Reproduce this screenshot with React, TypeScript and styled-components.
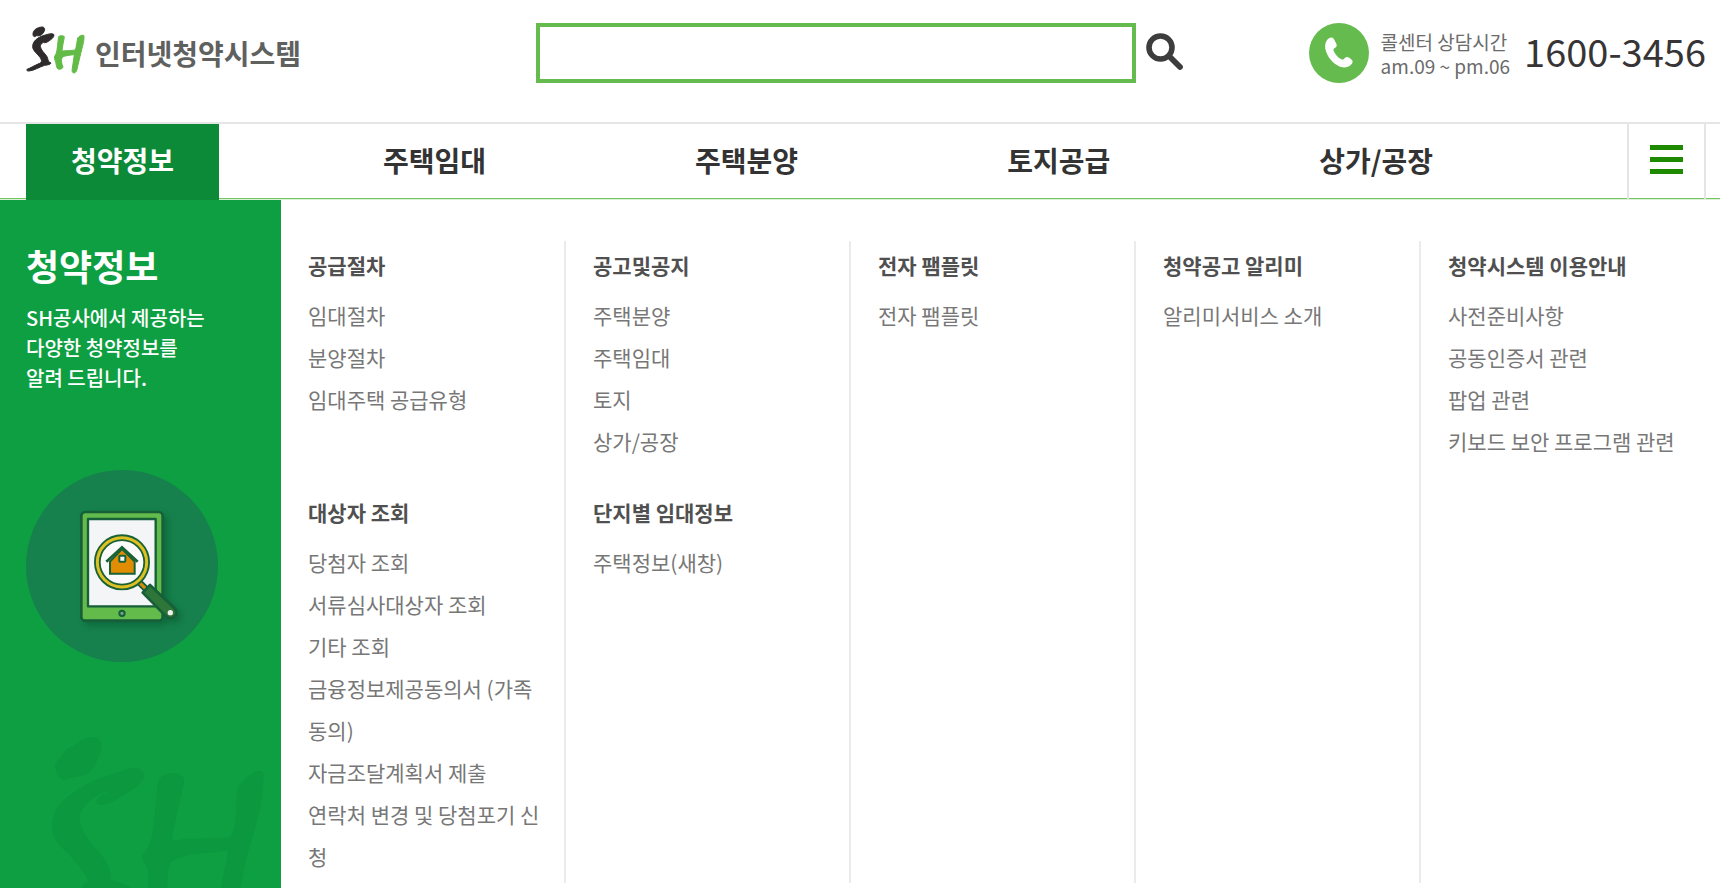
import React from 'react';
import styled, { createGlobalStyle, css } from 'styled-components';

const color = {
  green: '#65bb4d',
  panel: '#0d9f42',
  panelDark: '#0c8a38',
  line: '#e5e5e5',
  ink: '#333333',
  heading: '#505050',
  text: '#777777',
};

const GlobalStyle = createGlobalStyle`
  *, *::before, *::after { box-sizing: border-box; }
  body {
    margin: 0;
    background: #ffffff;
    color: ${color.ink};
    font-family: "Noto Sans CJK KR", "Noto Sans", sans-serif;
  }
  h2, h3, p, ul { margin: 0; padding: 0; }
  ul { list-style: none; }
  a { color: inherit; text-decoration: none; }
  button { padding: 0; border: 0; background: none; font: inherit; cursor: pointer; }
`;

const Page = styled.div`
  display: flex;
  flex-direction: column;
  min-height: 100vh;
`;

const Header = styled.header`
  display: grid;
  grid-template-columns: 1fr auto 1fr;
  align-items: start;
  padding: 23px 1px 39px 0;
`;

const Logo = styled.a`
  display: flex;
  align-items: flex-start;
  gap: 10px;
  padding: 3px 0 0 26px;
  color: #5f615f;
  font-size: 28px;
  font-weight: 700;
  line-height: 54px;
  white-space: nowrap;
`;

const Search = styled.form`
  display: flex;
  align-items: flex-start;
  gap: 10px;
`;

const SearchInput = styled.input`
  width: 600px;
  height: 60px;
  padding: 0 16px;
  border: 4px solid ${color.green};
  background: #ffffff;
  font: inherit;
  font-size: 21px;
  outline: none;
`;

const SearchButton = styled.button`
  display: flex;
  width: 37px;
  height: 37px;
  margin-top: 10px;
`;

const CallCenter = styled.div`
  display: flex;
  align-items: flex-start;
  justify-content: flex-end;
  gap: 12px;
  padding-right: 13px;
  white-space: nowrap;
`;

const CallHours = styled.p`
  padding-top: 7px;
  color: #6b6b6b;
  font-size: 19px;
  line-height: 24px;
`;

const CallNumber = styled.a`
  margin-left: 2px;
  color: #373435;
  font-size: 38px;
  line-height: 56px;
`;

const NavBar = styled.nav`
  display: flex;
  justify-content: space-between;
  height: 78px;
  padding-right: 14px;
  border-top: 2px solid ${color.line};
  background: linear-gradient(to top, #dcefd8 0 1px, #72c75e 1px 2px, #ffffff 2px);
`;

const Tabs = styled.ul`
  display: flex;
  gap: 119px;
  padding-left: 26px;
`;

const Tab = styled.a<{ $active?: boolean }>`
  display: block;
  padding: 0 45px 4px;
  font-size: 28px;
  font-weight: 700;
  line-height: 72px;
  white-space: nowrap;
  ${({ $active }) =>
    $active &&
    css`
      background: ${color.panelDark};
      color: #ffffff;
    `}
`;

const MenuButton = styled.button`
  display: flex;
  align-items: center;
  justify-content: center;
  width: 79px;
  padding-bottom: 6px;
  border-right: 2px solid ${color.line};
  border-left: 2px solid ${color.line};
`;

const MegaMenu = styled.section`
  display: flex;
  flex: 1;
`;

const Side = styled.aside`
  display: flex;
  flex: 0 0 281px;
  flex-direction: column;
  padding: 39px 0 0 26px;
  background: ${color.panel};
  color: #ffffff;
`;

const SideTitle = styled.h2`
  font-size: 36px;
  font-weight: 700;
  line-height: 52px;
`;

const SideText = styled.p`
  padding-top: 12px;
  font-size: 20px;
  font-weight: 500;
  line-height: 30px;
`;

const Emblem = styled.svg`
  display: block;
  width: 192px;
  height: 192px;
  margin-top: 77px;
`;

const Watermark = styled.svg`
  display: block;
  width: 212px;
  height: 151px;
  margin-top: auto;
  margin-left: 26px;
`;

const Columns = styled.div`
  display: grid;
  flex: 1;
  grid-template-columns: repeat(5, 1fr);
  padding: 41px 14px 5px 0;
`;

const Column = styled.div`
  padding: 3px 24px 6px 27px;
  border-right: 2px solid #ebebeb;

  &:last-child {
    border-right: 0;
  }
`;

const Group = styled.div`
  min-height: 247px;
`;

const GroupTitle = styled.h3`
  padding-bottom: 8px;
  color: ${color.heading};
  font-size: 21px;
  font-weight: 700;
  line-height: 42px;
`;

const GroupItem = styled.li`
  color: ${color.text};
  font-size: 21px;
  line-height: 42px;
`;

type MenuGroup = { title: string; items: string[] };

const tabs = ['청약정보', '주택임대', '주택분양', '토지공급', '상가/공장'];

const columns: MenuGroup[][] = [
  [
    { title: '공급절차', items: ['임대절차', '분양절차', '임대주택 공급유형'] },
    {
      title: '대상자 조회',
      items: [
        '당첨자 조회',
        '서류심사대상자 조회',
        '기타 조회',
        '금융정보제공동의서 (가족동의)',
        '자금조달계획서 제출',
        '연락처 변경 및 당첨포기 신청',
      ],
    },
  ],
  [
    { title: '공고및공지', items: ['주택분양', '주택임대', '토지', '상가/공장'] },
    { title: '단지별 임대정보', items: ['주택정보(새창)'] },
  ],
  [{ title: '전자 팸플릿', items: ['전자 팸플릿'] }],
  [{ title: '청약공고 알리미', items: ['알리미서비스 소개'] }],
  [
    {
      title: '청약시스템 이용안내',
      items: ['사전준비사항', '공동인증서 관련', '팝업 관련', '키보드 보안 프로그램 관련'],
    },
  ],
];

const BrandMark = () => (
  <svg width="59" height="48" viewBox="78 76 177 144" role="img" aria-label="SH">
    <g fill="#2f2b2c" stroke="#2f2b2c" strokeWidth="3" strokeLinejoin="round">
      <path d="M99 100C99 88 112 80 126 79C134 79 136 86 132 93C128 102 119 107 110 105L103 108C100 107 99 104 99 100Z" />
      <path d="M161 101C164 106 158 114 148 120C141 125 134 128 130 125C124 129 121 132 121 137C122 148 134 157 141 168C144 175 144 180 147 184L153 187C152 191 144 193 134 194C118 199 102 210 87 211C81 211 79 209 81 206C88 204 104 194 119 188C127 184 125 178 120 170C113 160 98 150 98 138C98 121 113 110 133 104C145 100 156 97 161 101Z" />
    </g>
    <g fill="#62bb46" stroke="#62bb46" strokeWidth="3" strokeLinejoin="round">
      <path d="M176 108C179 104 190 104 193 108C192 118 187 136 186 151C199 150 214 150 226 148C230 135 231 122 233 112C237 106 247 102 251 104C254 108 250 130 246 143C242 159 238 176 233 197C231 208 229 215 223 217C217 217 215 213 217 203L223 162C210 163 195 165 187 169C182 179 185 189 189 199C188 205 179 207 174 205C168 201 169 187 165 178C162 172 163 166 168 160C173 148 173 122 176 108Z" />
    </g>
  </svg>
);

const SearchIcon = () => (
  <svg width="37" height="37" viewBox="0 0 37 37" aria-hidden="true">
    <circle cx="14.5" cy="14.5" r="11.5" fill="none" stroke="#3d3d3d" strokeWidth="5.6" />
    <path d="M23.5 23.5L34 34" stroke="#3d3d3d" strokeWidth="5.8" strokeLinecap="round" />
  </svg>
);

const PhoneIcon = () => (
  <svg width="60" height="60" viewBox="0 0 180 180" aria-hidden="true">
    <circle cx="90" cy="90" r="90" fill={color.green} />
    <path
      fill="#ffffff"
      d="M60 46C66 42 72 44 75 49L82 62C85 68 82 73 76 76C73 79 73 82 75 86C80 96 88 104 97 109C101 111 104 109 107 106C111 101 116 101 122 105L128 110C133 114 131 120 126 125C117 134 105 135 93 131C71 122 54 101 49 78C47 64 51 52 60 46Z"
    />
  </svg>
);

const MenuIcon = () => (
  <svg width="33" height="29" viewBox="0 0 33 29" aria-hidden="true">
    <path d="M0 0H33V5H0ZM0 12H33V17H0ZM0 24H33V29H0Z" fill="#1d8a00" />
  </svg>
);

const TabletEmblem = () => (
  <Emblem viewBox="78 59 576 576" aria-hidden="true">
    <defs>
      <filter id="soft" x="-20%" y="-20%" width="150%" height="150%">
        <feDropShadow dx="12" dy="12" stdDeviation="10" floodColor="#0b4a2b" floodOpacity="0.4" />
      </filter>
    </defs>
    <circle cx="366" cy="347" r="288" fill="#16814c" />
    <g stroke="#135f38" strokeLinejoin="round" filter="url(#soft)">
      <rect x="244" y="185" width="244" height="326" rx="12" fill="#63bb4c" strokeWidth="8" />
      <rect x="264" y="206" width="203" height="262" fill="#f4f5f6" strokeWidth="7" />
      <circle cx="366" cy="489" r="8" fill="#7e9f8d" strokeWidth="6" />
      <path d="M418 396L442 420" stroke="#135f38" strokeWidth="20" />
      <path d="M418 396L442 420" stroke="#d98a0b" strokeWidth="9" />
      <path d="M450 404L524 474C532 483 530 493 523 499C515 506 505 504 498 498L428 427Z" fill="#2f7439" strokeWidth="8" />
      <circle cx="511" cy="487" r="8" fill="#eef1ee" stroke="none" />
    </g>
    <circle cx="366" cy="336" r="74" fill="#fbfbfb" stroke="#196236" strokeWidth="20" />
    <circle cx="366" cy="336" r="74" fill="none" stroke="#dfc022" strokeWidth="9" />
    <path d="M330 334V370H404V334L366 296Z" fill="#e08d04" stroke="#196236" strokeWidth="6" />
    <path d="M319 334L366 291L413 334" fill="none" stroke="#196236" strokeWidth="8" />
    <rect x="358" y="316" width="18" height="18" rx="2" fill="#fbfbfb" stroke="#196236" strokeWidth="6" />
  </Emblem>
);

const BrandWatermark = () => (
  <Watermark viewBox="155 111 636 453" aria-hidden="true">
    <g fill="#0b983e">
      <path d="M164 197C168 180 182 174 188 160C200 144 220 137 234 127C247 115 264 110 277 111C296 113 307 127 303 146C297 174 279 208 257 225C238 230 214 232 189 239C175 235 166 214 164 197Z" />
      <path d="M400 203C420 202 433 214 432 228C428 246 405 264 385 276C360 293 335 309 307 315C291 316 283 306 291 297C300 287 316 282 323 274C291 280 252 312 239 341C232 371 251 401 272 429C300 460 327 490 331 525V540C352 543 374 553 392 564H242C246 556 255 548 264 543C256 527 247 511 234 495C219 474 195 455 178 436C160 416 154 394 155 372C159 332 184 302 216 280C255 251 304 232 344 220C366 213 385 205 400 203Z" />
      <path d="M473 243C482 225 505 217 528 219C547 223 554 236 550 254C538 306 522 370 515 422C565 412 640 420 690 411C710 388 707 320 710 270C720 245 748 220 772 213C786 212 791 217 790 232C786 270 783 310 774 348C760 404 740 460 732 500L720 564H662C668 525 679 490 683 451C632 461 555 458 514 484C500 501 504 530 500 564H443C443 530 446 510 438 499L424 473C432 455 448 440 453 418C465 362 466 300 473 243Z" />
    </g>
  </Watermark>
);

export default function App() {
  return (
    <Page>
      <GlobalStyle />
      <Header>
        <Logo href="#">
          <BrandMark />
          <span>인터넷청약시스템</span>
        </Logo>
        <Search role="search" onSubmit={(event) => event.preventDefault()}>
          <SearchInput type="text" aria-label="검색어" />
          <SearchButton type="submit" aria-label="검색">
            <SearchIcon />
          </SearchButton>
        </Search>
        <CallCenter>
          <PhoneIcon />
          <CallHours>
            콜센터 상담시간
            <br />
            am.09 ~ pm.06
          </CallHours>
          <CallNumber href="tel:1600-3456">1600-3456</CallNumber>
        </CallCenter>
      </Header>

      <NavBar>
        <Tabs>
          {tabs.map((tab, index) => (
            <li key={tab}>
              <Tab href="#" $active={index === 0}>
                {tab}
              </Tab>
            </li>
          ))}
        </Tabs>
        <MenuButton type="button" aria-label="전체메뉴">
          <MenuIcon />
        </MenuButton>
      </NavBar>

      <MegaMenu>
        <Side>
          <SideTitle>청약정보</SideTitle>
          <SideText>
            SH공사에서 제공하는
            <br />
            다양한 청약정보를
            <br />
            알려 드립니다.
          </SideText>
          <TabletEmblem />
          <BrandWatermark />
        </Side>
        <Columns>
          {columns.map((groups) => (
            <Column key={groups[0].title}>
              {groups.map((group) => (
                <Group key={group.title}>
                  <GroupTitle>{group.title}</GroupTitle>
                  <ul>
                    {group.items.map((item) => (
                      <GroupItem key={item}>
                        <a href="#">{item}</a>
                      </GroupItem>
                    ))}
                  </ul>
                </Group>
              ))}
            </Column>
          ))}
        </Columns>
      </MegaMenu>
    </Page>
  );
}
